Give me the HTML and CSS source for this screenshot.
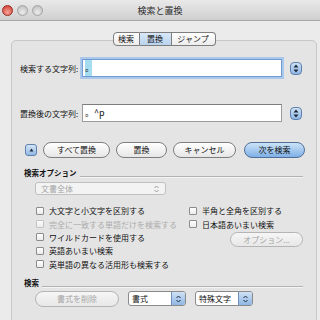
FILE: index.html
```html
<!DOCTYPE html>
<html lang="ja">
<head>
    <meta charset="UTF-8">
    <title>検索と置換</title>
    <link rel="stylesheet" href="styles.css">
</head>
<body>
    <div class="window">
        <div class="titlebar">
            <div class="lights">
                <span class="light red"></span>
                <span class="light"></span>
                <span class="light"></span>
            </div>
            <div class="title">検索と置換</div>
            <div></div>
        </div>
        <div class="content">
            <div class="tabs">
                <span class="tab t1">検索</span>
                <span class="tab t2 active">置換</span>
                <span class="tab t3">ジャンプ</span>
            </div>
            <div class="box">
                <div class="field-row row-find">
                    <label class="field-label">検索する文字列:</label>
                    <div class="field focus"><span class="sel">。</span></div>
                    <span class="stepper">
                        <svg width="6" height="9" viewBox="0 0 6 9"><path d="M3 0.5L5.5 3.5H0.5Z M3 8.5L5.5 5.5H0.5Z" fill="#1d2a3d"/></svg>
                    </span>
                </div>
                <div class="field-row row-replace">
                    <label class="field-label">置換後の文字列:</label>
                    <div class="field">。^p</div>
                    <span class="stepper">
                        <svg width="6" height="9" viewBox="0 0 6 9"><path d="M3 0.5L5.5 3.5H0.5Z M3 8.5L5.5 5.5H0.5Z" fill="#1d2a3d"/></svg>
                    </span>
                </div>
                <div class="actions">
                    <span class="disclosure">
                        <svg width="5" height="4" viewBox="0 0 5 4"><path d="M2.5 0.5L4.5 3.5H0.5Z" fill="#1d2a3d"/></svg>
                    </span>
                    <span class="btn w-all">すべて置換</span>
                    <span class="btn w-one">置換</span>
                    <span class="btn w-cancel">キャンセル</span>
                    <span class="btn primary w-next">次を検索</span>
                </div>
                <div class="section-head head-options">
                    <span>検索オプション</span>
                    <span class="rule"></span>
                </div>
                <div class="popup disabled">
                    <span>文書全体</span>
                    <svg width="5" height="8" viewBox="0 0 5 8"><path d="M0.5 3L2.5 1L4.5 3 M0.5 5L2.5 7L4.5 5" fill="none" stroke="#9a9a9a"/></svg>
                </div>
                <div class="checks">
                    <label class="check"><span class="box-mark"></span>大文字と小文字を区別する</label>
                    <label class="check"><span class="box-mark"></span>半角と全角を区別する</label>
                    <label class="check disabled"><span class="box-mark"></span>完全に一致する単語だけを検索する</label>
                    <label class="check"><span class="box-mark"></span>日本語あいまい検索</label>
                    <label class="check"><span class="box-mark"></span>ワイルドカードを使用する</label>
                    <div class="opt-cell"><span class="btn disabled w-opt">オプション...</span></div>
                    <label class="check"><span class="box-mark"></span>英語あいまい検索</label>
                    <div></div>
                    <label class="check wide"><span class="box-mark"></span>英単語の異なる活用形も検索する</label>
                </div>
                <div class="section-head head-search">
                    <span>検索</span>
                    <span class="rule"></span>
                </div>
                <div class="format-row">
                    <span class="btn disabled w-clear">書式を削除</span>
                    <div class="select w-format">
                        <span class="select-text">書式</span>
                        <span class="select-arrows">
                            <svg width="5" height="8" viewBox="0 0 5 8"><path d="M0.5 3L2.5 1L4.5 3 M0.5 5L2.5 7L4.5 5" fill="none" stroke="#1d2a3d"/></svg>
                        </span>
                    </div>
                    <div class="select w-special">
                        <span class="select-text">特殊文字</span>
                        <span class="select-arrows">
                            <svg width="5" height="8" viewBox="0 0 5 8"><path d="M0.5 3L2.5 1L4.5 3 M0.5 5L2.5 7L4.5 5" fill="none" stroke="#1d2a3d"/></svg>
                        </span>
                    </div>
                </div>
            </div>
        </div>
    </div>
</body>
</html>
```

FILE: styles.css
```css
* {
    box-sizing: border-box;
}
body {
    margin: 0;
    font-family: "Noto Sans CJK JP", "Noto Sans", sans-serif;
    font-size: 8px;
    color: #111;
    background: #ebebeb;
}
.window {
    width: 320px;
    height: 320px;
    overflow: hidden;
    background: #ebebeb;
}
.titlebar {
    height: 21px;
    display: grid;
    grid-template-columns: 1fr auto 1fr;
    align-items: center;
    background: linear-gradient(#e9e9e9, #d0d0d0);
    border-bottom: 1px solid #a8a8a8;
}
.lights {
    display: flex;
    gap: 4px;
    padding-left: 2px;
}
.light {
    width: 11px;
    height: 11px;
    border-radius: 50%;
    background: radial-gradient(circle at 50% 70%, #ececec, #b8b8b8);
    border: 1px solid #a4a4a4;
}
.light.red {
    background: radial-gradient(circle at 50% 70%, #f7a59a, #cc3126);
    border-color: #9c2b22;
}
.title {
    font-size: 9px;
    color: #2b2b2b;
}

.content {
    padding: 11px 3px 0 11px;
}
.tabs {
    position: relative;
    z-index: 1;
    display: flex;
    justify-content: center;
    margin-bottom: -6px;
}
.tab {
    height: 14px;
    line-height: 12px;
    text-align: center;
    background: linear-gradient(#ffffff, #ededed);
    border: 1px solid #7e7e7e;
    border-left: none;
}
.t1 {
    width: 27px;
    border-left: 1px solid #7e7e7e;
    border-radius: 4px 0 0 4px;
}
.t2 {
    width: 32px;
}
.t3 {
    width: 44px;
    border-radius: 0 4px 4px 0;
}
.tab.active {
    background: linear-gradient(#d9e8f7, #b9d3ee);
}

.box {
    height: 300px;
    background: #e4e4e4;
    border: 1px solid #c8c8c8;
    border-radius: 5px;
}

.field-row {
    display: flex;
    align-items: center;
    padding-left: 8px;
    height: 18px;
}
.row-find {
    margin-top: 18px;
}
.row-replace {
    margin-top: 27px;
}
.field-label {
    width: 62px;
    white-space: nowrap;
}
.field {
    width: 200px;
    height: 18px;
    background: #ffffff;
    border: 1px solid #9b9b9b;
    border-top-color: #7c7c7c;
    padding: 0 2px;
    line-height: 16px;
    font-size: 9px;
}
.field.focus {
    border-color: #6f9bd1;
    box-shadow: 0 0 0 2px #a9c8ec;
}
.sel {
    display: inline-block;
    width: 7px;
    background: #a6dcef;
}
.stepper {
    width: 12px;
    height: 13px;
    margin-left: 8px;
    display: flex;
    align-items: center;
    justify-content: center;
    border: 1px solid #5d80ad;
    border-radius: 4px;
    background: linear-gradient(#cfe1f5, #8fb6e3);
}

.actions {
    display: flex;
    align-items: center;
    gap: 6px;
    margin-top: 20px;
    padding-left: 13px;
    height: 16px;
}
.disclosure {
    width: 12px;
    height: 12px;
    display: flex;
    align-items: center;
    justify-content: center;
    border: 1px solid #5d80ad;
    border-radius: 3px;
    background: linear-gradient(#d3e4f6, #94b9e4);
}
.btn {
    height: 16px;
    line-height: 14px;
    text-align: center;
    border: 1px solid #7e7e7e;
    border-radius: 8px;
    background: linear-gradient(#ffffff, #e6e6e6);
    white-space: nowrap;
}
.btn.primary {
    border-color: #4f6f99;
    background: linear-gradient(#cde3f8, #7fb0e6);
}
.btn.disabled {
    color: #a5a5a5;
    border-color: #b5b5b5;
    background: linear-gradient(#f6f6f6, #e7e7e7);
}
.w-all {
    width: 67px;
}
.w-one {
    width: 51px;
}
.w-cancel {
    width: 63px;
}
.w-next {
    width: 61px;
    margin-left: 2px;
}

.section-head {
    display: flex;
    align-items: flex-end;
    padding-left: 12px;
    padding-right: 13px;
    height: 12px;
    font-weight: bold;
    font-size: 7.5px;
}
.head-options {
    margin-top: 8px;
}
.head-search {
    margin-top: 5px;
}
.section-head .rule {
    flex: 1;
    height: 1px;
    margin-left: 3px;
    margin-bottom: 1px;
    background: #b2b2b2;
    box-shadow: 0 1px 0 #f4f4f4;
}

.popup {
    width: 131px;
    height: 13px;
    margin: 4px 0 0 23px;
    padding: 0 6px 0 5px;
    display: flex;
    align-items: center;
    justify-content: space-between;
    border: 1px solid #c0c0c0;
    border-radius: 3px;
    background: #f3f3f3;
}
.popup.disabled {
    color: #a5a5a5;
}

.checks {
    display: grid;
    grid-template-columns: 153px 1fr;
    grid-auto-rows: 13.4px;
    margin-top: 9px;
    padding-left: 24px;
}
.check {
    display: flex;
    align-items: center;
    gap: 5px;
    white-space: nowrap;
}
.check.wide {
    grid-column: 1 / 3;
}
.check.disabled {
    color: #acacac;
}
.box-mark {
    width: 8px;
    height: 8px;
    border: 1px solid #8c8c8c;
    border-radius: 1px;
    background: linear-gradient(#ffffff, #ebebeb);
}
.check.disabled .box-mark {
    border-color: #c3c3c3;
}
.opt-cell {
    display: flex;
    align-items: flex-end;
    padding-left: 41px;
}
.w-opt {
    width: 73px;
    height: 15px;
    line-height: 13px;
    position: relative;
    top: 3px;
}

.format-row {
    display: flex;
    align-items: center;
    margin-top: 3px;
    padding-left: 23px;
    height: 16px;
}
.w-clear {
    width: 84px;
}
.select {
    display: flex;
    height: 15px;
    border: 1px solid #8a8a8a;
    border-radius: 3px;
    background: #ffffff;
    overflow: hidden;
}
.w-format {
    width: 58px;
    margin-left: 9px;
}
.w-special {
    width: 58px;
    margin-left: 9px;
}
.select-text {
    flex: 1;
    padding-left: 3px;
    line-height: 13px;
}
.select-arrows {
    width: 14px;
    display: flex;
    align-items: center;
    justify-content: center;
    border-left: 1px solid #6f8fb8;
    background: linear-gradient(#cfe1f5, #8fb6e3);
}
```
